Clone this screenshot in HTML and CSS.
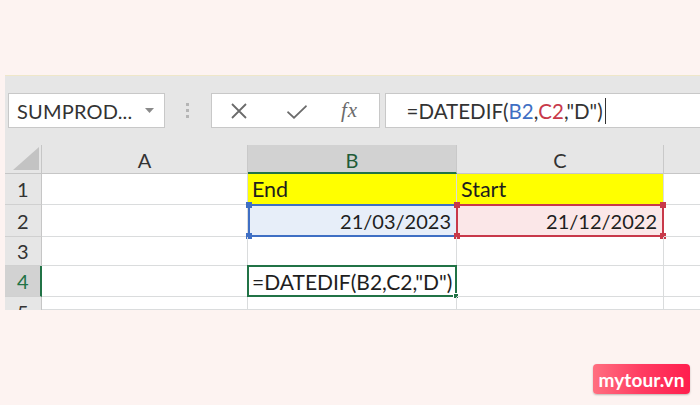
FILE: index.html
```html
<!DOCTYPE html>
<html>
<head>
<meta charset="utf-8">
<link rel="stylesheet" href="styles.css">
</head>
<body>
<div class="page">
  <div class="top"></div>
  <div class="excel">
    <div class="toolbar">
      <div class="namebox">
        <span class="name">SUMPROD...</span>
        <svg class="drop" width="9" height="5" viewBox="0 0 9 5"><path d="M0 0 H9 L4.5 5 Z" fill="#8a8a8a"/></svg>
      </div>
      <div class="grip"><i></i><i></i><i></i></div>
      <div class="fbuttons">
        <svg class="btn" width="18" height="18" viewBox="0 0 18 18"><path d="M2 2 L16 16 M16 2 L2 16" stroke="#6b6b6b" stroke-width="1.8" fill="none"/></svg>
        <svg class="btn" width="22" height="18" viewBox="0 0 22 18"><path d="M2 9 L8 14.5 L20 3 L21 4.5 L8 17 L1 10.5 Z" fill="#6b6b6b"/></svg>
        <span class="fx">fx</span>
      </div>
      <div class="formula">=DATEDIF(<span class="rb">B2</span>,<span class="rc">C2</span>,"D")<span class="cursor"></span></div>
    </div>
    <div class="sheet">
      <div class="hd corner"><svg width="26" height="23" viewBox="0 0 26 23"><path d="M26 0 V23 H0 Z" fill="#c3c3c3"/></svg></div>
      <div class="hd col">A</div>
      <div class="hd col sel-col">B</div>
      <div class="hd col">C</div>
      <div class="hd col last"></div>

      <div class="hd row">1</div>
      <div class="cell"></div>
      <div class="cell yellow">End</div>
      <div class="cell yellow">Start</div>
      <div class="cell last"></div>

      <div class="hd row">2</div>
      <div class="cell"></div>
      <div class="cell num refb">21/03/2023<i class="h tl"></i><i class="h bl"></i></div>
      <div class="cell num refc">21/12/2022<i class="h tl"></i><i class="h tr"></i><i class="h bl"></i><i class="h br"></i></div>
      <div class="cell last"></div>

      <div class="hd row">3</div>
      <div class="cell"></div>
      <div class="cell"></div>
      <div class="cell"></div>
      <div class="cell last"></div>

      <div class="hd row sel-row">4</div>
      <div class="cell"></div>
      <div class="cell active">=DATEDIF(B2,C2,"D")<i class="fill"></i></div>
      <div class="cell"></div>
      <div class="cell last"></div>

      <div class="hd row part">5</div>
      <div class="cell"></div>
      <div class="cell"></div>
      <div class="cell"></div>
      <div class="cell last"></div>
    </div>
  </div>
  <div class="bottom">
    <div class="logo">mytour.vn</div>
  </div>
</div>
</body>
</html>
```
FILE: styles.css
```css
* { box-sizing: border-box; }
html, body { margin: 0; padding: 0; }
body {
  width: 700px;
  height: 405px;
  overflow: hidden;
  background: #fdf3f1;
  font-family: Lato, "Liberation Sans", sans-serif;
}
.page { width: 700px; height: 405px; position: relative; }
.top { height: 75px; }
.excel {
  margin-left: 5px;
  width: 695px;
  height: 235px;
  overflow: hidden;
  border-top: 1px solid #efe7c9;
  background: #e6e6e6;
}
.toolbar {
  height: 69px;
  display: flex;
  align-items: flex-start;
  padding: 17px 0 0 3px;
}
.namebox {
  width: 159px;
  height: 35px;
  background: #fff;
  border: 1px solid #c8c8c8;
  display: flex;
  align-items: center;
  padding: 0 0 0 8px;
  color: #333;
  font-size: 20px;
}
.name { flex: 1; letter-spacing: 0.2px; }
.drop { margin-right: 10px; }
.grip {
  width: 47px;
  height: 35px;
  display: flex;
  flex-direction: column;
  align-items: center;
  justify-content: center;
  gap: 3px;
}
.grip i { display: block; width: 3px; height: 3px; background: #b5b5b5; }
.fbuttons {
  width: 171px;
  height: 35px;
  background: #fff;
  border: 1px solid #c8c8c8;
  display: flex;
  align-items: center;
  padding-left: 18px;
  gap: 0;
}
.fbuttons .btn:first-child { margin-right: 38px; }
.fbuttons .btn:nth-child(2) { margin-right: 33px; }
.fx {
  font-family: "Liberation Serif", serif;
  font-style: italic;
  font-size: 21px;
  color: #6b6b6b;
  letter-spacing: 1px;
}
.formula {
  margin-left: 5px;
  width: 320px;
  height: 35px;
  background: #fff;
  border: 1px solid #c8c8c8;
  border-right: none;
  display: flex;
  align-items: center;
  padding-left: 21px;
  font-size: 20.5px;
  color: #333;
  white-space: pre;
}
.rb { color: #3f6fc4; }
.rc { color: #c8394a; }
.cursor { display: inline-block; width: 1.5px; height: 26px; background: #333; margin-left: 2px; }

.sheet {
  display: grid;
  grid-template-columns: 37px 206px 209px 207px 36px;
  grid-template-rows: 29px 31px 32px 29px 31px 13px;
  background: #fff;
}
.hd {
  background: #e6e6e6;
  color: #333;
  font-size: 20px;
  display: flex;
  align-items: center;
  justify-content: center;
}
.corner {
  align-items: flex-end;
  justify-content: flex-end;
  padding: 0 2px 3px 0;
  border-right: 1px solid #c6c6c6;
  border-bottom: 1px solid #c6c6c6;
}
.col {
  border-right: 1px solid #c9c9c9;
  border-bottom: 1px solid #c6c6c6;
  padding-top: 2px;
}
.col.last { border-right: none; }
.sel-col {
  background: #d2d2d2;
  color: #1f5c38;
  border-bottom: 2px solid #217346;
}
.row {
  border-right: 1px solid #c6c6c6;
  border-bottom: 1px solid #d0d0d0;
  justify-content: flex-start;
  padding-left: 12px;
}
.row.part {
  align-items: flex-start;
  padding-top: 3px;
  line-height: 24px;
  overflow: hidden;
  border-bottom: none;
}
.sel-row {
  background: #d2d2d2;
  color: #217346;
  border-right: 2px solid #217346;
}
.cell {
  border-right: 1px solid #dadcdd;
  border-bottom: 1px solid #dadcdd;
  font-size: 21.5px;
  color: #1e1e1e;
  display: flex;
  align-items: center;
  padding: 0 4px;
  position: relative;
  white-space: nowrap;
}
.cell.last { border-right: none; }
.yellow { background: #ffff00; }
.num { justify-content: flex-end; padding-right: 5px; font-size: 20px; }
.refb {
  background: #e7eef9;
  border: 2px solid #3f6fc4;
  border-right: 1px solid #dadcdd;
  margin-top: -1px;
}
.refc {
  background: #fbe7e8;
  border: 2px solid #c8394a;
  margin-top: -1px;
  margin-left: -1px;
}
.h { position: absolute; width: 6px; height: 6px; display: block; }
.refb .h { background: #3f6fc4; }
.refc .h { background: #c8394a; }
.tl { left: -4px; top: -4px; }
.tr { right: -4px; top: -4px; }
.bl { left: -4px; bottom: -4px; }
.br { right: -4px; bottom: -4px; }
.active {
  border: 2px solid #217346;
  margin: -1px 0 0 -1px;
  padding-left: 3px;
  font-size: 21px;
  color: #1e1e1e;
}
.fill {
  position: absolute;
  right: -4px;
  bottom: -4px;
  width: 6px;
  height: 6px;
  background: #217346;
  border: 1px solid #fff;
  display: block;
}
.bottom {
  height: 95px;
  display: flex;
  justify-content: flex-end;
  align-items: flex-start;
  padding: 54px 10px 0 0;
}
.logo {
  width: 97px;
  height: 30px;
  border-radius: 4px;
  background: linear-gradient(90deg, #ff6f80 0%, #ff3c62 50%, #ff1f4e 100%);
  box-shadow: 0 1px 2px rgba(0,0,0,0.25);
  color: #fff;
  font-weight: 700;
  font-size: 19px;
  display: flex;
  align-items: center;
  justify-content: center;
  letter-spacing: 0.1px;
}
```
